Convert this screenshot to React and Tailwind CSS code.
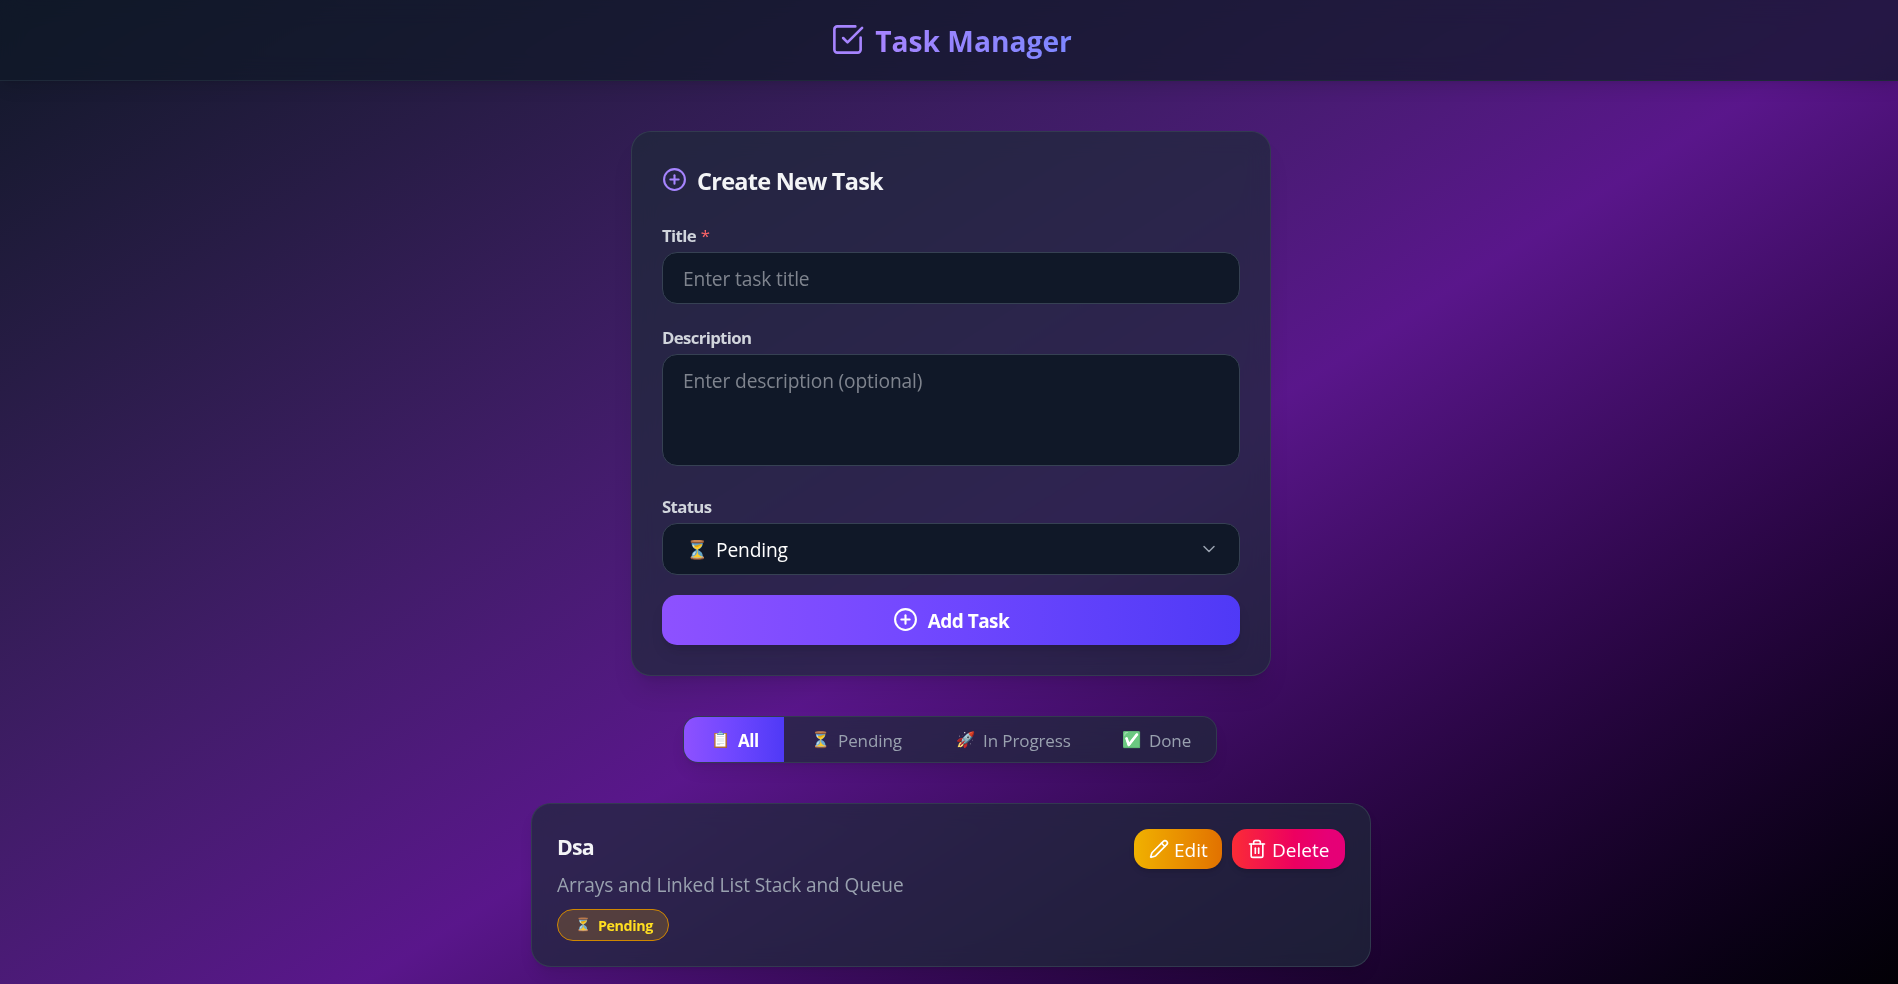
import { ChevronDown, CirclePlus, Pencil, SquareCheckBig, Trash2 } from "lucide-react";

const filters = [
  { emoji: "📋", label: "All", width: "w-[100px]", active: true },
  { emoji: "⏳", label: "Pending", width: "w-[145px]" },
  { emoji: "🚀", label: "In Progress", width: "w-[166px]" },
  { emoji: "✅", label: "Done", width: "w-[121px]", tint: "hue-rotate-[35deg] brightness-110 saturate-75" },
];

function Label({ children }) {
  return (
    <label className="mb-[5px] block h-[25px] pt-px text-[16.8px] font-bold leading-[25px] tracking-[-0.65px] text-gray-300">
      {children}
    </label>
  );
}

function Header() {
  return (
    <header className="flex h-[81px] items-center justify-center gap-2.5 border-b border-gray-800 bg-gray-900/70 shadow-lg backdrop-blur-md">
      <SquareCheckBig className="mb-px size-[35px] text-violet-400" strokeWidth={1.8} />
      <h1 className="bg-linear-to-r from-violet-400 to-indigo-400 bg-clip-text pt-0.5 text-[28.2px] font-bold leading-10 text-transparent">
        Task Manager
      </h1>
    </header>
  );
}

function TaskForm() {
  return (
    <section className="w-[640px] rounded-[20px] border border-gray-700/80 bg-gray-800/70 p-[30px] shadow-xl backdrop-blur-md">
      <h2 className="mb-[25px] flex h-[35px] items-center gap-2.5 text-[23.5px] font-bold leading-[35px] tracking-[-0.75px] text-gray-100">
        <CirclePlus className="size-[25px] text-violet-400" strokeWidth={2} />
        <span className="pt-[3px]">Create New Task</span>
      </h2>

      <Label>
        Title <span className="ml-px font-normal text-red-400">*</span>
      </Label>
      <input
        className="mb-5 block h-[52px] w-full rounded-[15px] border border-gray-700 bg-gray-900 px-5 pt-px text-[19.2px] tracking-[-0.14px] text-gray-100 outline-none placeholder:text-[#7f848e]"
        placeholder="Enter task title"
      />

      <Label>Description</Label>
      <textarea
        className="mb-[27px] block h-[112px] w-full resize-none rounded-[15px] border border-gray-700 bg-gray-900 px-5 pt-[11px] text-[19.2px] leading-[30px] tracking-[-0.14px] text-gray-100 outline-none placeholder:text-[#7f848e]"
        placeholder="Enter description (optional)"
      />

      <Label>Status</Label>
      <button className="mb-5 flex h-[52px] w-full items-center rounded-[15px] border border-gray-700 bg-gray-900 px-5 text-[19.2px] leading-[30px] tracking-[-0.14px] text-white">
        <span className="mr-[6px] flex w-[27px] justify-center text-[18px]">⏳</span>
        <span className="pt-0.5">Pending</span>
        <ChevronDown className="ml-auto size-5 text-gray-400" strokeWidth={1.8} />
      </button>

      <button className="flex h-[50px] w-full items-center justify-center gap-2.5 rounded-[15px] bg-linear-to-r from-violet-500 to-indigo-600 text-[19px] font-bold tracking-[-0.55px] text-white shadow-lg">
        <CirclePlus className="mb-px size-[25px]" strokeWidth={2} />
        <span className="pt-0.5">Add Task</span>
      </button>
    </section>
  );
}

function Filters() {
  return (
    <nav className="mr-0.5 flex h-[47px] overflow-hidden rounded-[15px] border border-gray-700/80 bg-gray-800/70 shadow-lg backdrop-blur-md">
      {filters.map((f) => (
        <button
          key={f.label}
          className={`flex items-center pl-6 text-[17px] whitespace-nowrap ${f.width} ${
            f.active
              ? "bg-linear-to-r from-violet-500 to-indigo-600 font-bold tracking-[-0.4px] text-white"
              : "font-medium tracking-[-0.1px] text-gray-400"
          }`}
        >
          <span className={`mr-[5px] flex w-[25px] justify-center text-[15.5px] ${f.tint ?? ""}`}>{f.emoji}</span>
          <span className="pt-0.5">{f.label}</span>
        </button>
      ))}
    </nav>
  );
}

function TaskCard() {
  return (
    <article className="flex h-[164px] w-[840px] items-start justify-between rounded-[20px] border border-gray-700/80 bg-gray-800/70 p-[25px] shadow-lg backdrop-blur-md">
      <div>
        <h3 className="text-[21.4px] font-bold leading-[35px] tracking-[-0.8px] text-gray-100">Dsa</h3>
        <p className="mt-1.5 text-[19.1px] leading-[30px] tracking-[-0.12px] text-gray-400">
          Arrays and Linked List Stack and Queue
        </p>
        <span className="mt-[9px] flex h-8 w-[112px] items-center rounded-full border border-yellow-600 bg-yellow-500/20 pl-[15px] text-[14.3px] font-bold tracking-[-0.4px] text-yellow-300">
          <span className="mr-[5px] flex w-5 justify-center text-[13px]">⏳</span>
          <span className="pt-px">Pending</span>
        </span>
      </div>
      <div className="flex gap-2.5 text-[19px] text-white">
        <button className="flex h-10 w-[88px] items-center gap-[5px] rounded-[15px] bg-linear-to-r from-yellow-500 to-amber-600 pl-[15px] shadow-md">
          <Pencil className="size-5" />
          <span className="pt-0.5">Edit</span>
        </button>
        <button className="flex h-10 w-[113px] items-center gap-[5px] rounded-[15px] bg-linear-to-r/srgb from-red-500 to-pink-600 to-85% pl-[15px] shadow-md">
          <Trash2 className="size-5" />
          <span className="pt-0.5">Delete</span>
        </button>
      </div>
    </article>
  );
}

export default function App() {
  return (
    <div className="h-[984px] w-full overflow-hidden font-['Open_Sans','Noto_Sans',sans-serif]">
      <div className="min-h-[1215px] w-[1902px] bg-linear-to-br from-gray-900 via-purple-900 to-black">
        <Header />
        <main className="flex flex-col items-center gap-10 pt-[50px]">
          <TaskForm />
          <Filters />
          <TaskCard />
        </main>
      </div>
    </div>
  );
}
